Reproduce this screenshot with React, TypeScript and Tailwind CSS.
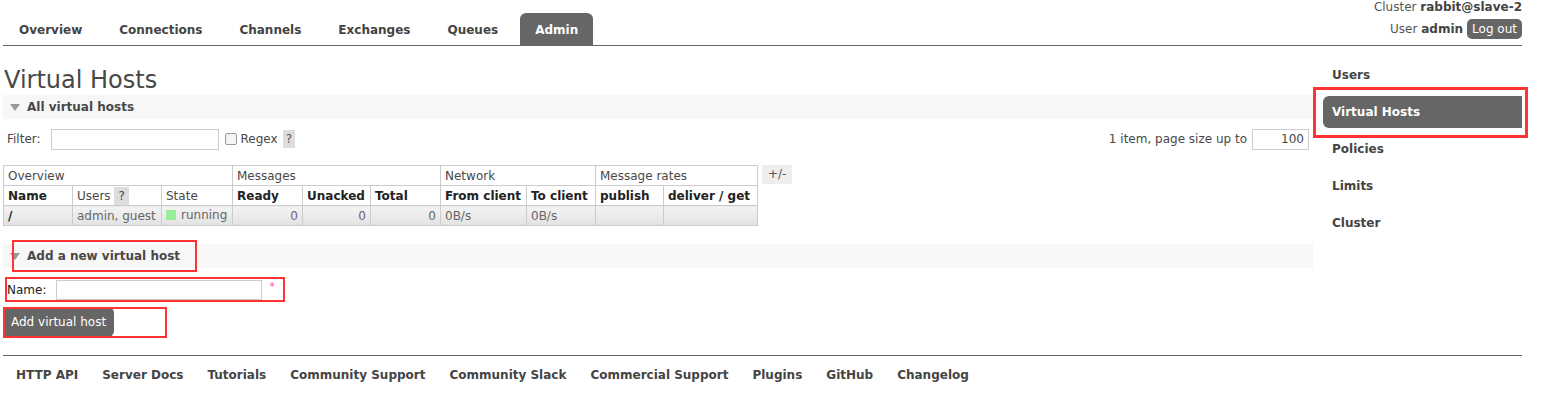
import React from 'react';

const tabs = ['Overview', 'Connections', 'Channels', 'Exchanges', 'Queues', 'Admin'];
const sideItems = ['Users', 'Virtual Hosts', 'Policies', 'Limits', 'Cluster'];
const footerLinks = [
  'HTTP API',
  'Server Docs',
  'Tutorials',
  'Community Support',
  'Community Slack',
  'Commercial Support',
  'Plugins',
  'GitHub',
  'Changelog',
];

function SectionHeader({ title }: { title: string }) {
  return (
    <div className="flex items-center h-[24px] bg-[#f7f7f7] pl-[7px]">
      <span className="w-0 h-0 border-l-[5px] border-r-[5px] border-t-[7px] border-l-transparent border-r-transparent border-t-[#999] mr-[7px]" />
      <span className="font-bold text-[12px] text-[#484848]">{title}</span>
    </div>
  );
}

export default function App() {
  const th = 'border border-[#ccc] px-[4px] h-[20px] text-left font-normal';
  const thb = 'border border-[#ccc] px-[4px] h-[20px] text-left font-bold text-[#222]';
  const td = 'border border-[#ccc] px-[4px] h-[20px] bg-gradient-to-b from-[#f4f4f4] to-[#e2e2e2]';

  return (
    <div
      className="relative w-[1553px] h-[394px] bg-white text-[12px] text-[#484848] overflow-hidden"
      style={{ fontFamily: '"DejaVu Sans", Verdana, sans-serif' }}
    >
      {/* header */}
      <div className="ml-[3px] w-[1519px] h-[46px] flex justify-between border-b border-[#666]">
        <ul className="flex items-end gap-[7px] pl-[1px]">
          {tabs.map((t) => (
            <li
              key={t}
              className={
                'h-[32px] px-[15px] flex items-center pt-[1px] font-bold text-[12px] rounded-t-[6px] ' +
                (t === 'Admin' ? 'bg-[#666] text-white' : 'text-[#444]')
              }
            >
              {t}
            </li>
          ))}
        </ul>
        <div className="flex flex-col items-end text-[12px] text-[#555]">
          <div className="h-[16px] leading-[14px]">
            Cluster <b className="text-[#444]">rabbit@slave-2</b>
          </div>
          <div className="flex items-center gap-[4px] mt-[3px]">
            <span>
              User <b className="text-[#444]">admin</b>
            </span>
            <span className="bg-[#666] text-white rounded-[5px] px-[5px] h-[20px] leading-[20px]">Log out</span>
          </div>
        </div>
      </div>

      <div className="flex">
        {/* main column */}
        <div className="ml-[3px] w-[1310px]">
          <h1 className="text-[24px] leading-[30px] mt-[19px] ml-[1px] text-[#484848]">Virtual Hosts</h1>
          <SectionHeader title="All virtual hosts" />

          <div className="flex items-center justify-between mt-[9px] h-[22px]">
            <div className="flex items-center">
              <span className="ml-[4px] mr-[10px]">Filter:</span>
              <input className="w-[168px] h-[21px] border border-[#ccc] outline-none" />
              <span className="ml-[6px] w-[12px] h-[12px] border border-[#999] rounded-[2px] bg-[#f5f5f5]" />
              <span className="ml-[4px]">Regex</span>
              <span className="ml-[5px] bg-[#ddd] px-[3px] h-[18px] leading-[18px] text-[#555]">?</span>
            </div>
            <div className="flex items-center mr-[4px]">
              <span className="mr-[5px]">1 item, page size up to</span>
              <input
                defaultValue="100"
                className="w-[57px] h-[21px] border border-[#ccc] text-right pr-[4px] text-[12px] outline-none"
              />
            </div>
          </div>

          <div className="flex items-start mt-[15px]">
            <table className="border-collapse text-[12px] leading-[14px]">
              <colgroup>
                <col className="w-[69px]" />
                <col className="w-[89px]" />
                <col className="w-[71px]" />
                <col className="w-[70px]" />
                <col className="w-[68px]" />
                <col className="w-[70px]" />
                <col className="w-[86px]" />
                <col className="w-[69px]" />
                <col className="w-[68px]" />
                <col className="w-[94px]" />
              </colgroup>
              <thead>
                <tr>
                  <th colSpan={3} className={th}>Overview</th>
                  <th colSpan={3} className={th}>Messages</th>
                  <th colSpan={2} className={th}>Network</th>
                  <th colSpan={2} className={th}>Message rates</th>
                </tr>
                <tr>
                  <th className={thb}>Name</th>
                  <th className={th}>
                    Users <span className="bg-[#ddd] px-[4px] inline-block h-[18px] leading-[18px]">?</span>
                  </th>
                  <th className={th}>State</th>
                  <th className={thb}>Ready</th>
                  <th className={thb}>Unacked</th>
                  <th className={thb}>Total</th>
                  <th className={thb}>From client</th>
                  <th className={thb}>To client</th>
                  <th className={thb}>publish</th>
                  <th className={thb}>deliver / get</th>
                </tr>
              </thead>
              <tbody>
                <tr>
                  <td className={td + ' font-bold text-[#222]'}>/</td>
                  <td className={td + ' text-[#666]'}>admin, guest</td>
                  <td className={td + ' text-[#666]'}>
                    <span className="inline-flex items-center gap-[5px]">
                      <span className="w-[10px] h-[10px] bg-[#99ee99]" />
                      running
                    </span>
                  </td>
                  <td className={td + ' text-right text-[#666]'}>0</td>
                  <td className={td + ' text-right text-[#666]'}>0</td>
                  <td className={td + ' text-right text-[#666]'}>0</td>
                  <td className={td + ' text-[#666]'}>0B/s</td>
                  <td className={td + ' text-[#666]'}>0B/s</td>
                  <td className={td} />
                  <td className={td} />
                </tr>
              </tbody>
            </table>
            <span className="ml-[4px] bg-[#eee] px-[6px] h-[19px] leading-[19px] text-[#555]">+/-</span>
          </div>

          <div className="relative mt-[18px]">
            <SectionHeader title="Add a new virtual host" />
            <div className="absolute left-[9px] top-[-4px] w-[185px] h-[32px] border-2 border-[#f33]" />
          </div>

          <div className="relative flex items-center mt-[11px] h-[21px]">
            <span className="ml-[4px] mr-[10px] text-[#222]">Name:</span>
            <input className="w-[206px] h-[20px] border border-[#ccc] outline-none" />
            <span className="ml-[7px] text-[#f58] text-[11px] self-start">*</span>
            <div className="absolute left-[2px] top-[-2px] w-[280px] h-[25px] border-2 border-[#f33]" />
          </div>

          <div className="relative mt-[7px] h-[31px]">
            <button className="bg-[#666] text-white rounded-[6px] h-[30px] px-[8px] text-[12px]">Add virtual host</button>
            <div className="absolute left-0 top-0 w-[164px] h-[31px] border-2 border-[#f33]" />
          </div>
        </div>

        {/* sidebar */}
        <div className="relative ml-[10px] w-[199px] pt-[13px]">
          <ul className="flex flex-col gap-[5px]">
            {sideItems.map((s) => (
              <li
                key={s}
                className={
                  'h-[32px] flex items-center pl-[9px] font-bold text-[12px] ' +
                  (s === 'Virtual Hosts' ? 'bg-[#666] text-white rounded-l-[6px]' : 'text-[#444]')
                }
              >
                {s}
              </li>
            ))}
          </ul>
          <div className="absolute left-[-10px] top-[41px] w-[215px] h-[51px] border-[3px] border-[#f33]" />
        </div>
      </div>

      {/* footer */}
      <div className="ml-[3px] w-[1519px] border-t border-[#666] mt-[17px] flex gap-[24px] pl-[13px] pt-[10px]">
        {footerLinks.map((l) => (
          <span key={l} className="font-bold text-[12px] text-[#444]">
            {l}
          </span>
        ))}
      </div>
    </div>
  );
}
